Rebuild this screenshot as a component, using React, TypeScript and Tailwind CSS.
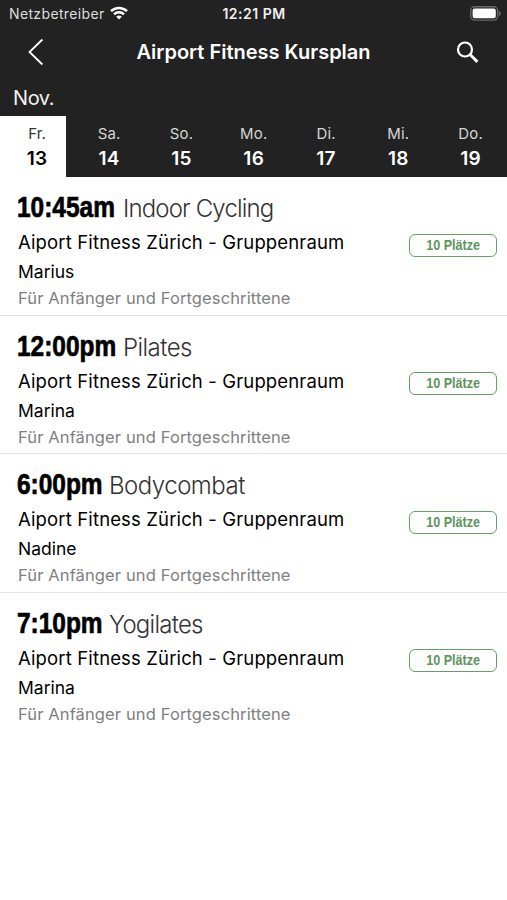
const days = [
  { name: "Fr.", date: "13" },
  { name: "Sa.", date: "14" },
  { name: "So.", date: "15" },
  { name: "Mo.", date: "16" },
  { name: "Di.", date: "17" },
  { name: "Mi.", date: "18" },
  { name: "Do.", date: "19" },
];

type Course = { time: string; timeWidth: string; title: string; tracking: string; coach: string };

const courses: Course[] = [
  { time: "10:45am", timeWidth: "w-[106px]", title: "Indoor Cycling", tracking: "tracking-[-0.85px]", coach: "Marius" },
  { time: "12:00pm", timeWidth: "w-[106px]", title: "Pilates", tracking: "tracking-[-0.55px]", coach: "Marina" },
  { time: "6:00pm", timeWidth: "w-[92px]", title: "Bodycombat", tracking: "tracking-[-0.5px]", coach: "Nadine" },
  { time: "7:10pm", timeWidth: "w-[92px]", title: "Yogilates", tracking: "tracking-[-0.75px]", coach: "Marina" },
];

function StatusBar() {
  return (
    <div className="grid h-7 grid-cols-[1fr_auto_1fr] items-center pl-[9px] pr-[6px] text-[14px] leading-7">
      <div className="flex items-center gap-[5px]">
        <span className="tracking-[0.36px] text-[#dedede]">Netzbetreiber</span>
        <svg width="18" height="14" viewBox="0 0 18 14" fill="none" stroke="#fff" strokeWidth="2.5" className="-mt-[2px]">
          <path d="M1 5.1a11.6 11.6 0 0 1 16 0" />
          <path d="M4 8.3a7.2 7.2 0 0 1 10 0" />
          <path d="M9 13.5 6.2 10.8a4.1 4.1 0 0 1 5.6 0Z" fill="#fff" stroke="none" />
        </svg>
      </div>
      <span className="mr-[2px] font-semibold tracking-[0.5px] text-[#f0f0f0]">12:21 PM</span>
      <svg className="-mt-[2px] justify-self-end" width="31" height="15" viewBox="0 0 31 15">
        <rect x="0.7" y="0.7" width="27" height="13.4" rx="4" fill="none" stroke="#666" strokeWidth="1.4" />
        <rect x="2.6" y="2.5" width="23.2" height="9.8" rx="2.2" fill="#fff" />
        <path d="M29 5v5q2-.8 2-2.5T29 5Z" fill="#666" />
      </svg>
    </div>
  );
}

function CourseRow({ course }: { course: Course }) {
  return (
    <li className="flex h-[138.5px] items-start justify-between border-b border-[#e4e4e4] pl-[18px] pr-[10px] pt-[14px] last:border-transparent">
      <div className="whitespace-nowrap">
        <h2 className="-ml-px flex h-8 items-baseline leading-8">
          <span className={course.timeWidth}>
            <span className="inline-block origin-left scale-x-[0.815] font-['Liberation_Sans',Arial,sans-serif] text-[30px] font-bold text-black [-webkit-text-stroke:0.7px_black]">
              {course.time}
            </span>
          </span>
          <span className="text-[24px] font-light text-[#333]">
            <span className={course.tracking}>{course.title}</span>
          </span>
        </h2>
        <p className="mt-[5px] text-[18.5px] leading-[29px] tracking-[0.14px] text-black">Aiport Fitness Zürich - Gruppenraum</p>
        <p className="text-[17.5px] leading-[29px] text-black">{course.coach}</p>
        <p className="text-[16.5px] leading-[25px] tracking-[0.12px] text-[#808080]">Für Anfänger und Fortgeschrittene</p>
      </div>
      <span className="mt-[42.5px] flex h-[23px] w-[88px] items-center justify-center rounded-[6px] border-[1.5px] border-[#63a063] text-[#5c965c]">
        <span className="scale-x-[0.84] whitespace-nowrap font-['Liberation_Sans',Arial,sans-serif] text-[15px] font-bold">
          10 Plätze
        </span>
      </span>
    </li>
  );
}

export default function App() {
  return (
    <div className="h-[900px] w-[507px] overflow-hidden bg-white font-['Inter',sans-serif]">
      <header className="h-[177px] bg-[#222] text-white">
        <StatusBar />
        <nav className="grid h-[48px] grid-cols-[110px_1fr_110px] items-center">
          <button className="pl-[28px]" aria-label="Zurück">
            <svg width="16" height="28" viewBox="0 0 16 28" fill="none" stroke="#fff" strokeWidth="1.8">
              <path d="M14.4 1.5 1.5 14l12.9 12.5" />
            </svg>
          </button>
          <h1 className="whitespace-nowrap text-center text-[20px] font-semibold">Airport Fitness Kursplan</h1>
          <button className="justify-self-end pr-[28px]" aria-label="Suchen">
            <svg width="23" height="23" viewBox="0 0 23 23" fill="none" stroke="#fff">
              <circle cx="9" cy="8.5" r="7" strokeWidth="2.2" />
              <path d="m14 13.5 7.4 7.4" strokeWidth="2.9" />
            </svg>
          </button>
        </nav>
        <div className="h-[40px] pl-[13px] pt-[8px] text-[20px] leading-[28px] tracking-[-0.4px] text-[#f2f2f2]">Nov.</div>
        <div className="flex h-[61px]">
          {days.map((day, index) => (
            <button
              key={day.date}
              className={
                index === 0
                  ? "flex w-[66px] shrink-0 flex-col items-center bg-white pl-2 pt-[6px] text-black"
                  : "flex w-[72.3px] shrink-0 flex-col items-center pl-[14px] pt-[6px] text-white"
              }
            >
              <span className={index === 0 ? "text-[15px] leading-[23px] text-[#333]" : "text-[15px] leading-[23px] tracking-[0.15px] text-[#d5d5d5]"}>
                {day.name}
              </span>
              <span className="text-[19px] font-semibold leading-[27px] tracking-[0.3px]">{day.date}</span>
            </button>
          ))}
        </div>
      </header>
      <ul>
        {courses.map((course) => (
          <CourseRow key={course.time} course={course} />
        ))}
      </ul>
    </div>
  );
}
